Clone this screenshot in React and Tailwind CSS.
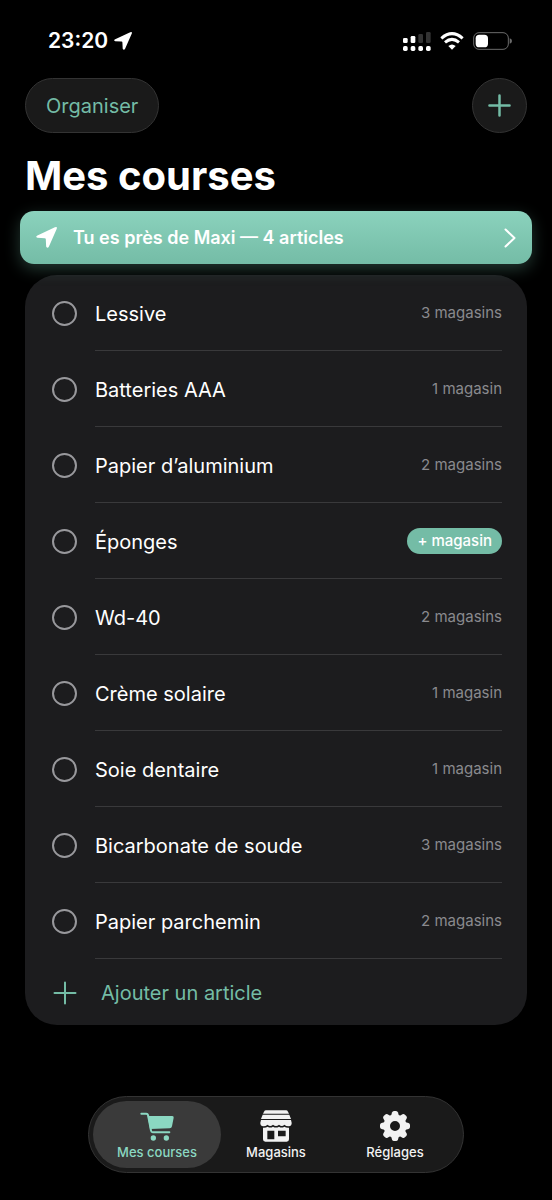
import React, { useState } from 'react';

const ITEMS = [
  { id: 1, name: 'Lessive', stores: 3 },
  { id: 2, name: 'Batteries AAA', stores: 1 },
  { id: 3, name: 'Papier d’aluminium', stores: 2 },
  { id: 4, name: 'Éponges', stores: 0 },
  { id: 5, name: 'Wd-40', stores: 2 },
  { id: 6, name: 'Crème solaire', stores: 1 },
  { id: 7, name: 'Soie dentaire', stores: 1 },
  { id: 8, name: 'Bicarbonate de soude', stores: 3 },
  { id: 9, name: 'Papier parchemin', stores: 2 },
];

const LocationArrow = ({ className }) => (
  <svg viewBox="0 0 60 60" className={className} fill="currentColor" aria-hidden="true">
    <path d="M54 1 Q62 -2 59 6 L37 56 Q33 63 29 56 L28 35 Q28 32 25 32 L4 31 Q-3 28 4 24 Z" />
  </svg>
);

const PlusIcon = ({ className, strokeWidth }) => (
  <svg viewBox="0 0 24 24" className={className} fill="none" stroke="currentColor" strokeWidth={strokeWidth} strokeLinecap="round" aria-hidden="true">
    <path d="M12 1.5 V22.5 M1.5 12 H22.5" />
  </svg>
);

const CartIcon = () => (
  <svg viewBox="0 0 102 87" className="w-[34px] h-[29px]" fill="none" stroke="currentColor" strokeLinecap="round" strokeLinejoin="round" aria-hidden="true">
    <path d="M4 5 H19 Q23 5 24 9 L33 56 Q34 61 38 61 H88" strokeWidth="6" />
    <path d="M23 12 H97 Q102 12 101 17 L96 43 Q95 49 89 49 L30 51 Z" fill="currentColor" stroke="none" />
    <circle cx="40" cy="78" r="8" fill="currentColor" stroke="none" />
    <circle cx="79" cy="78" r="8" fill="currentColor" stroke="none" />
  </svg>
);

const StoreIcon = () => (
  <svg viewBox="0 0 96 96" className="w-8 h-8" fill="currentColor" aria-hidden="true">
    <path d="M18 1 H78 Q82 1 84 5 L87 11 H9 L12 5 Q14 1 18 1 Z" />
    <path d="M8 14 H88 L93 27 H3 Z" />
    <path d="M3 30 H93 L95 38 Q96 47 86 49 Q78 49 73 44 Q66 52 57 44 Q48 52 39 44 Q30 52 23 44 Q17 49 10 49 Q0 47 1 38 Z" />
    <path
      fillRule="evenodd"
      d="M9 53 Q17 54 23 50 Q31 55 39 50 Q48 55 57 50 Q65 55 73 50 Q79 54 87 53 V88 Q87 95 80 95 H16 Q9 95 9 88 Z M22 62 V88 H43 V62 Z M54 62 V79 H77 V62 Z"
    />
  </svg>
);

const GearIcon = () => (
  <svg viewBox="0 0 60 60" className="w-[30px] h-[30px]" fill="currentColor" aria-hidden="true">
    {[0, 45, 90, 135, 180, 225, 270, 315].map((angle) => (
      <path key={angle} d="M21 14 L24 3 Q25 0 28 0 H32 Q35 0 36 3 L39 14 Z" transform={`rotate(${angle} 30 30)`} />
    ))}
    <circle cx="30" cy="30" r="16.5" fill="none" stroke="currentColor" strokeWidth="13" />
  </svg>
);

const TABS = [
  { id: 'courses', label: 'Mes courses', Icon: CartIcon },
  { id: 'magasins', label: 'Magasins', Icon: StoreIcon },
  { id: 'reglages', label: 'Réglages', Icon: GearIcon },
];

const StatusBar = () => (
  <div className="flex items-center justify-between pl-12 pr-10 pt-[25px]">
    <div className="flex items-center gap-1.5">
      <span className="text-[21px] leading-8 font-semibold">23:20</span>
      <LocationArrow className="w-[18px] h-[18px]" />
    </div>
    <div className="flex items-center gap-[9px]">
      <svg viewBox="0 0 84 57" className="w-7 h-[19px]" fill="currentColor" aria-hidden="true">
        <rect x="0" y="18" width="14" height="15" rx="4" />
        <rect x="23" y="12" width="14" height="21" rx="4" />
        <rect x="46" y="6" width="14" height="27" rx="4" opacity="0.2" />
        <rect x="69" y="0" width="14" height="33" rx="4" opacity="0.2" />
        <rect x="0" y="42" width="14" height="15" rx="5" />
        <rect x="23" y="42" width="14" height="15" rx="5" />
        <rect x="46" y="42" width="14" height="15" rx="5" />
        <rect x="69" y="42" width="14" height="15" rx="5" />
      </svg>
      <svg viewBox="0 0 72 54" className="w-6 h-[18px]" fill="none" stroke="currentColor" strokeWidth="9" aria-hidden="true">
        <path d="M4 19 Q36 -9 68 19" />
        <path d="M15 31 Q36 13 57 31" />
        <path d="M36 53 L25 42 Q36 33 47 42 Z" fill="currentColor" stroke="none" />
      </svg>
      <svg viewBox="0 0 117 54" className="w-[39px] h-[18px]" fill="none" aria-hidden="true">
        <rect x="2" y="2" width="104" height="50" rx="16" stroke="#6b6b6b" strokeWidth="3" />
        <rect x="8" y="8" width="37" height="38" rx="11" fill="currentColor" />
        <path d="M110 19 Q117 21 117 27 Q117 33 110 35 Z" fill="#6b6b6b" />
      </svg>
    </div>
  </div>
);

const StoreCount = ({ count }) => {
  if (count === 0) {
    return (
      <button type="button" className="rounded-full bg-[#74bca6] px-2.5 text-[15px] leading-[26px] font-medium text-white">
        + magasin
      </button>
    );
  }
  return (
    <span className="pt-0.5 text-[15px] text-[#8a8a8e]">
      {count} {count > 1 ? 'magasins' : 'magasin'}
    </span>
  );
};

const App = () => {
  const [checked, setChecked] = useState([]);
  const [tab, setTab] = useState('courses');

  const toggle = (id) => {
    setChecked((prev) => (prev.includes(id) ? prev.filter((x) => x !== id) : [...prev, id]));
  };

  return (
    <div className="min-h-screen flex flex-col bg-black text-white font-['Inter',sans-serif]">
      <StatusBar />

      <header className="px-[25px] pt-[21px]">
        <div className="flex items-center justify-between">
          <button type="button" className="h-[55px] rounded-full border border-[#333333] bg-[#1a1a1a] px-5 text-xl text-[#74bca6]">
            Organiser
          </button>
          <button type="button" aria-label="Ajouter" className="flex h-[55px] w-[55px] items-center justify-center rounded-full border border-[#333333] bg-[#1a1a1a] text-[#74bca6]">
            <PlusIcon className="w-[23px] h-[23px]" strokeWidth="2.6" />
          </button>
        </div>
        <h1 className="pt-[18px] text-[40px] leading-[50px] font-bold">Mes courses</h1>
      </header>

      {/* Nearby store banner */}
      <div className="relative z-10 px-5 pt-[10px]">
        <button type="button" className="flex h-[53px] w-full items-center rounded-[14px] bg-gradient-to-b from-[#8bd2bd] to-[#74bca6] px-4 text-white shadow-[0_5px_16px_rgba(116,188,166,0.3)]">
          <LocationArrow className="w-[21px] h-[21px]" />
          <span className="pl-4 text-lg font-semibold">Tu es près de Maxi — 4 articles</span>
          <svg viewBox="0 0 12 20" className="ml-auto h-5 w-3" fill="none" stroke="currentColor" strokeWidth="2" strokeLinecap="round" strokeLinejoin="round" aria-hidden="true">
            <path d="M1.5 1.5 L10.5 10 L1.5 18.5" />
          </svg>
        </button>
      </div>

      <main className="px-[25px] pt-[11px] pb-8">
        <div className="rounded-[32px] bg-[#1c1c1e] pl-[27px] pr-[25px]">
          <ul>
            {ITEMS.map((item) => (
              <li key={item.id} className="flex h-[76px] items-center gap-[18px]">
                <input
                  id={`item-${item.id}`}
                  type="checkbox"
                  checked={checked.includes(item.id)}
                  onChange={() => toggle(item.id)}
                  className="h-[25px] w-[25px] shrink-0 appearance-none rounded-full border-2 border-[#98989c] checked:border-[#74bca6] checked:bg-[#74bca6]"
                />
                <div className="flex h-full grow items-center justify-between border-b border-[#39393b]">
                  <label htmlFor={`item-${item.id}`} className="pt-0.5 text-xl">{item.name}</label>
                  <StoreCount count={item.stores} />
                </div>
              </li>
            ))}
          </ul>
          <button type="button" className="flex h-[66px] w-full items-center gap-6 pt-0.5 pl-px text-xl text-[#74bca6]">
            <PlusIcon className="w-6 h-6" strokeWidth="2" />
            Ajouter un article
          </button>
        </div>
      </main>

      <nav className="mx-auto mt-auto mb-[27px] flex h-[77px] rounded-full border border-[#333333] bg-[#1a1a1a] p-1">
        {TABS.map(({ id, label, Icon }) => (
          <button
            key={id}
            type="button"
            onClick={() => setTab(id)}
            className={`-mr-[9px] flex w-32 flex-col items-center justify-end rounded-full pb-2 last:mr-0 ${tab === id ? 'bg-[#3a3a3a] text-[#8bd8c2]' : 'text-[#f2f2f2]'}`}
          >
            <span className="flex h-8 items-center">
              <Icon />
            </span>
            <span className="pt-0.5 text-[13px] leading-4 font-medium">{label}</span>
          </button>
        ))}
      </nav>
    </div>
  );
};

export default App;
